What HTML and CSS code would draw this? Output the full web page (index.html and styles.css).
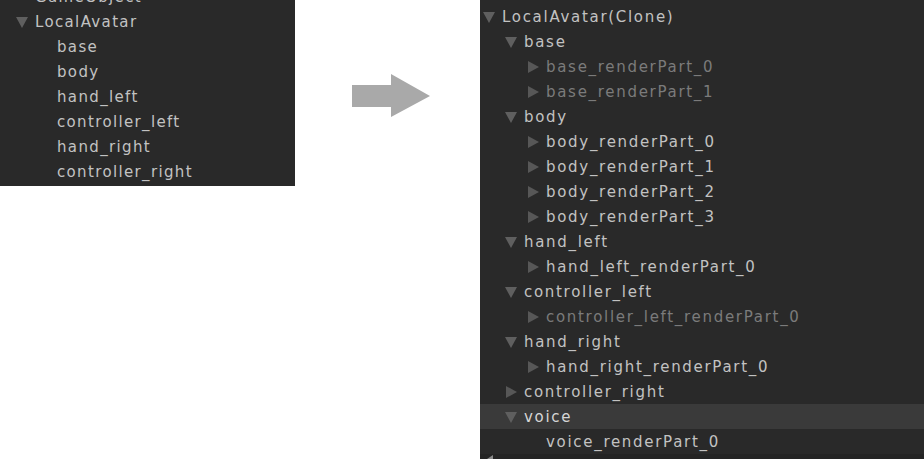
FILE: index.html
```html
<!DOCTYPE html>
<html>
<head>
<meta charset="utf-8">
<link rel="stylesheet" href="styles.css">
</head>
<body>
<div class="stage">
  <div class="panel left">
    <div class="list">
      <div class="row l0"><span class="tw"></span><span class="name">GameObject</span></div>
      <div class="row l0"><span class="tw down"></span><span class="name">LocalAvatar</span></div>
      <div class="row l1"><span class="tw"></span><span class="name">base</span></div>
      <div class="row l1"><span class="tw"></span><span class="name">body</span></div>
      <div class="row l1"><span class="tw"></span><span class="name">hand_left</span></div>
      <div class="row l1"><span class="tw"></span><span class="name">controller_left</span></div>
      <div class="row l1"><span class="tw"></span><span class="name">hand_right</span></div>
      <div class="row l1"><span class="tw"></span><span class="name">controller_right</span></div>
    </div>
  </div>

  <svg class="arrow" width="78" height="43" viewBox="0 0 78 43">
    <polygon points="0,11 39,11 39,0 78,22 39,43 39,33 0,33" fill="#a9a9a9"/>
  </svg>

  <div class="panel right">
    <div class="list">
      <div class="row l0"><span class="tw"></span><span class="name">TrackingSpace</span></div>
      <div class="row l0"><span class="tw down"></span><span class="name">LocalAvatar(Clone)</span></div>
      <div class="row l1"><span class="tw down"></span><span class="name">base</span></div>
      <div class="row l2"><span class="tw rt"></span><span class="name dim">base_renderPart_0</span></div>
      <div class="row l2"><span class="tw rt"></span><span class="name dim">base_renderPart_1</span></div>
      <div class="row l1"><span class="tw down"></span><span class="name">body</span></div>
      <div class="row l2"><span class="tw rt"></span><span class="name">body_renderPart_0</span></div>
      <div class="row l2"><span class="tw rt"></span><span class="name">body_renderPart_1</span></div>
      <div class="row l2"><span class="tw rt"></span><span class="name">body_renderPart_2</span></div>
      <div class="row l2"><span class="tw rt"></span><span class="name">body_renderPart_3</span></div>
      <div class="row l1"><span class="tw down"></span><span class="name">hand_left</span></div>
      <div class="row l2"><span class="tw rt"></span><span class="name">hand_left_renderPart_0</span></div>
      <div class="row l1"><span class="tw down"></span><span class="name">controller_left</span></div>
      <div class="row l2"><span class="tw rt"></span><span class="name dim">controller_left_renderPart_0</span></div>
      <div class="row l1"><span class="tw down"></span><span class="name">hand_right</span></div>
      <div class="row l2"><span class="tw rt"></span><span class="name">hand_right_renderPart_0</span></div>
      <div class="row l1"><span class="tw rt"></span><span class="name">controller_right</span></div>
      <div class="row l1 sel"><span class="tw down"></span><span class="name">voice</span></div>
      <div class="row l2"><span class="tw"></span><span class="name">voice_renderPart_0</span></div>
    </div>
    <div class="hscroll"><span class="hs-tip"></span></div>
  </div>
</div>
</body>
</html>
```

FILE: styles.css
```css
html, body {
  margin: 0;
  padding: 0;
  background: #ffffff;
}

.stage {
  display: flex;
  align-items: flex-start;
  width: 924px;
  height: 459px;
  overflow: hidden;
}

.panel {
  background: #292929;
  overflow: hidden;
  flex: none;
  font-family: "DejaVu Sans", Verdana, sans-serif;
  font-size: 15px;
  letter-spacing: 1.35px;
  color: #c2c2c2;
}

.panel.left {
  width: 295px;
  height: 186px;
}

.panel.left .list {
  margin-top: -16px;
}

.panel.right {
  width: 444px;
  height: 459px;
  margin-left: 50px;
  position: relative;
  letter-spacing: 1.7px;
}

.panel.right .list {
  margin-top: -21px;
}

.arrow {
  flex: none;
  margin-left: 57px;
  margin-top: 74px;
  display: block;
}

.row {
  display: flex;
  align-items: center;
  height: 25px;
  line-height: 25px;
  white-space: nowrap;
}

.row.sel {
  background: #3a3a3a;
  color: #d6d6d6;
}

.left .row.l0 { padding-left: 16px; }
.left .row.l1 { padding-left: 38px; }

.right .row.l0 { padding-left: 3px; }
.right .row.l1 { padding-left: 25px; }
.right .row.l2 { padding-left: 47px; }

.tw {
  flex: none;
  width: 13px;
  height: 12px;
  margin-right: 6px;
  position: relative;
}

.tw.down::before {
  content: "";
  position: absolute;
  left: 0;
  top: 1px;
  border-left: 6.5px solid transparent;
  border-right: 6.5px solid transparent;
  border-top: 11px solid #5f5f5f;
}

.tw.rt::before {
  content: "";
  position: absolute;
  left: 1px;
  top: 0;
  border-top: 6px solid transparent;
  border-bottom: 6px solid transparent;
  border-left: 11px solid #575757;
}

.name {
  margin-top: 1px;
}

.name.dim {
  color: #7b7b7b;
}

.hscroll {
  position: absolute;
  left: 0;
  right: 0;
  bottom: 0;
  height: 5px;
  background: #242424;
}

.hs-tip {
  position: absolute;
  left: 7px;
  top: 1px;
  border-top: 4px solid transparent;
  border-bottom: 4px solid transparent;
  border-right: 6px solid #8a8a8a;
}
```
